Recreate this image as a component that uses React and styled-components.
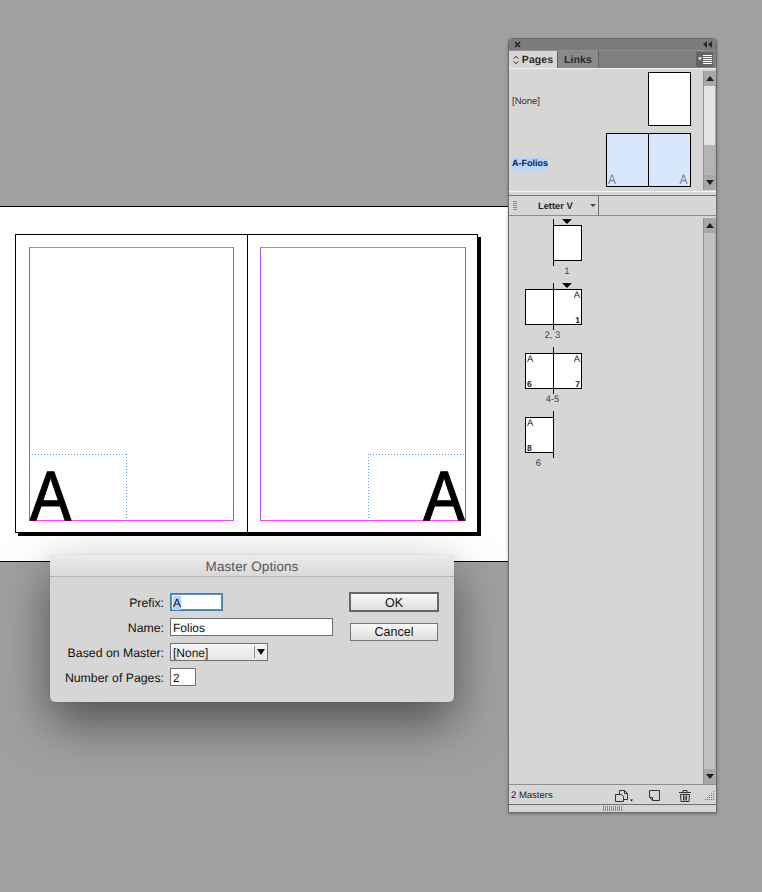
import React from 'react'
import styled, { createGlobalStyle } from 'styled-components'

const GlobalStyle = createGlobalStyle`
  * { box-sizing: border-box; }
  html, body { margin: 0; padding: 0; background: #a0a0a0; }
  body { font-family: "Liberation Sans", Arial, sans-serif; overflow: hidden; text-rendering: geometricPrecision; }
`

const Screen = styled.div`
  position: relative;
  width: 762px;
  height: 892px;
  padding-top: 206px;
  overflow: hidden;
`

/* document canvas */
const Pasteboard = styled.div`
  height: 356px;
  width: 520px;
  background: #fff;
  border-top: 1px solid #000;
  border-bottom: 1px solid #000;
  padding: 27px 0 0 15px;
`
const Spread = styled.div`
  display: flex;
  width: 463px;
  height: 299px;
  border: 1px solid #000;
  box-shadow: 3px 3px 0 #000;
`
const Page = styled.div`
  flex: 0 0 ${p => (p.$right ? '230px' : '231px')};
  padding: ${p => (p.$right ? '12px 11px 11px 12px' : '12px 13px 11px 13px')};
  border-left: ${p => (p.$right ? '1px solid #000' : 'none')};
  display: flex;
`
const MarginBox = styled.div`
  flex: 1;
  display: flex;
  flex-direction: column;
  justify-content: flex-end;
  align-items: ${p => (p.$right ? 'flex-end' : 'flex-start')};
  border: 1px solid;
  border-color: #d968e6 #a84ce8 #ff45ff #a84ce8;
`
const dots = '#5b97f0 0 1px, transparent 1px 3px'
const TextFrame = styled.div`
  width: 98px;
  height: 67px;
  margin-bottom: -1px;
  margin-${p => (p.$right ? 'right' : 'left')}: -1px;
  display: flex;
  align-items: flex-end;
  justify-content: ${p => (p.$right ? 'flex-end' : 'flex-start')};
  background:
    repeating-linear-gradient(90deg, ${dots}) top / ${p => (p.$right ? '95px' : '100%')} 1px no-repeat,
    repeating-linear-gradient(${dots}) ${p => (p.$right ? 'left' : 'right')} top / 1px 100% no-repeat
    ${p => (p.$right ? '' : `, repeating-linear-gradient(${dots}) left top / 1px 100% no-repeat`)};
`
const BigLetter = styled.span`
  font-size: 70px;
  line-height: 50px;
  height: 50px;
  color: #000;
  display: block;
  -webkit-text-stroke: 1.3px #000;
  transform: scaleX(0.88);
  transform-origin: ${p => (p.$right ? 'right' : 'left')} bottom;
  margin: ${p => (p.$right ? '0 1px 0 0' : '0 0 0 1px')};
`

/* master options dialog */
const Dialog = styled.div`
  position: absolute;
  left: 50px;
  top: 555px;
  width: 404px;
  height: 147px;
  background: #d6d6d6;
  border-radius: 5px;
  box-shadow: 0 20px 50px rgba(0, 0, 0, 0.5), 0 0 1px rgba(0, 0, 0, 0.3);
`
const DialogTitle = styled.div`
  height: 22px;
  line-height: 23px;
  border-bottom: 1px solid #b4b4b4;
  border-radius: 5px 5px 0 0;
  background: linear-gradient(#ececec, #d8d8d8);
  text-align: center;
  font-size: 13.5px;
  letter-spacing: 0.1px;
  color: #55565a;
`
const DialogBody = styled.div`
  display: flex;
  justify-content: space-between;
  padding: 16px 15px 0 0;
`
const Form = styled.div`
  display: grid;
  grid-template-columns: 114px auto;
  column-gap: 6px;
  row-gap: 7px;
  align-items: center;
  justify-items: start;
`
const Label = styled.label`
  justify-self: end;
  padding-top: 1px;
  font-size: 12.3px;
  color: #111;
`
const Field = styled.div`
  width: ${p => p.$w}px;
  height: 18px;
  line-height: 18px;
  padding-left: 2px;
  background: #fff;
  font-size: 12px;
  color: #111;
  border: ${p => (p.$focus ? '1px solid #3f7fb8' : '1px solid #707070')};
  box-shadow: ${p => (p.$focus ? '0 0 0 1px #5c93c4 inset' : 'none')};
`
const Selected = styled.span`
  display: inline-block;
  height: 14px;
  line-height: 15px;
  background: #b5d5ff;
`
const SelectBox = styled.div`
  width: 98px;
  height: 18px;
  display: flex;
  background: linear-gradient(#f6f6f6, #e6e6e6);
  border: 1px solid #707070;
  font-size: 12px;
  line-height: 18px;
  color: #111;
`
const SelectText = styled.span`
  flex: 1;
  padding-left: 2px;
`
const SelectArrow = styled.span`
  width: 13px;
  margin: 2px 0;
  border-left: 1px solid #8a8a8a;
  display: flex;
  align-items: center;
  justify-content: center;
  &::after {
    content: '';
    border-left: 4px solid transparent;
    border-right: 4px solid transparent;
    border-top: 6px solid #111;
  }
`
const Buttons = styled.div`
  display: flex;
  flex-direction: column;
  align-items: center;
  gap: 11px;
  margin-top: -1px;
`
const Button = styled.button`
  display: block;
  padding: ${p => (p.$primary ? '1px 0 0' : '0')};
  width: ${p => (p.$primary ? '90px' : '88px')};
  height: ${p => (p.$primary ? '20px' : '18px')};
  font: 12.5px "Liberation Sans", Arial, sans-serif;
  color: #111;
  background: linear-gradient(#f8f8f8, #dedede);
  border: ${p => (p.$primary ? '2px solid #666' : '1px solid #777')};
  border-radius: 0;
`

/* pages panel */
const Panel = styled.div`
  position: absolute;
  left: 508px;
  top: 38px;
  width: 209px;
  height: 775px;
  display: flex;
  flex-direction: column;
  background: #d6d6d6;
  border: 1px solid #6d6d6d;
  border-radius: 4px 4px 0 0;
  box-shadow: 0 1px 3px rgba(0, 0, 0, 0.3);
`
const TitleBar = styled.div`
  height: 11px;
  flex: none;
  display: flex;
  align-items: center;
  justify-content: space-between;
  padding: 0 4px 0 5px;
  background: #7b7b7b;
  border-radius: 3px 3px 0 0;
`
const TabRow = styled.div`
  height: 18px;
  flex: none;
  display: flex;
  align-items: stretch;
  background: #7f7f7f;
  border-top: 1px solid #8f8f8f;
`
const Tab = styled.div`
  width: ${p => p.$w}px;
  display: flex;
  align-items: center;
  justify-content: center;
  gap: 3px;
  font-size: 10.5px;
  font-weight: bold;
  letter-spacing: 0.1px;
  color: #2c2c2c;
  background: ${p => (p.$active ? '#d6d6d6' : '#8a8a8a')};
  border-right: 1px solid #666;
`
const MenuButton = styled.div`
  margin: 1px 3px 1px auto;
  width: 17px;
  display: flex;
  align-items: center;
  justify-content: center;
  background: #646464;
`
const Masters = styled.div`
  height: 123px;
  flex: none;
  display: flex;
  border-top: 1px solid #f2f2f2;
`
const MasterList = styled.div`
  flex: 1;
  display: flex;
  flex-direction: column;
  padding: 3px 12px 0 3px;
  gap: 7px;
`
const MasterRow = styled.div`
  height: 54px;
  display: flex;
  justify-content: space-between;
  align-items: center;
`
const MasterName = styled.span`
  font-size: ${p => (p.$active ? '9px' : '9.5px')};
  font-weight: ${p => (p.$active ? 'bold' : 'normal')};
  color: ${p => (p.$active ? '#0b1c3c' : '#333')};
  background: ${p => (p.$active ? '#b5d5ff' : 'transparent')};
  line-height: 11px;
  margin-top: ${p => (p.$active ? '6px' : '4px')};
`
const Thumb = styled.div`
  height: 100%;
  width: ${p => p.$w}px;
  display: flex;
  background: ${p => (p.$tint ? '#d8e8fb' : '#fff')};
  border: 1px solid #000;
`
const ThumbPage = styled.div`
  flex: 1;
  display: flex;
  align-items: flex-end;
  justify-content: ${p => (p.$right ? 'flex-end' : 'flex-start')};
  padding: 0 3px 0 1px;
  border-left: ${p => (p.$right ? '1px solid #000' : 'none')};
`
const ThumbLetter = styled.span`
  display: block;
  font-size: 14px;
  line-height: 13px;
  color: #6b7fa2;
  transform: scaleX(0.85);
  transform-origin: ${p => (p.$right ? 'right' : 'left')} bottom;
`
const Scrollbar = styled.div`
  width: 13px;
  flex: none;
  margin: ${p => (p.$tall ? '2px 0 0 0' : '2px 0 1px 0')};
  display: flex;
  flex-direction: column;
  background: #b9b9b9;
  border-left: 1px solid #8e8e8e;
  border-right: 1px solid #a8a8a8;
`
const ScrollArrow = styled.div`
  height: 15px;
  flex: none;
  display: flex;
  align-items: center;
  justify-content: center;
  background: #a8a8a8;
  &::after {
    content: '';
    border-left: 4px solid transparent;
    border-right: 4px solid transparent;
    border-${p => (p.$down ? 'top' : 'bottom')}: 5px solid #1f1f1f;
  }
`
const ScrollThumb = styled.div`
  height: 59px;
  flex: none;
  background: #e4e4e4;
`
const ScrollTrack = styled.div`
  flex: 1;
  background: ${p => (p.$light ? '#c2c2c2' : '#b4b4b4')};
`
const Splitter = styled.div`
  height: 5px;
  flex: none;
  border-top: 1px solid #f4f4f4;
  border-bottom: 1px solid #757575;
`
const SizeBar = styled.div`
  height: 20px;
  flex: none;
  display: flex;
  align-items: center;
  border-bottom: 1px solid #8c8c8c;
`
const Grip = styled.div`
  width: 4px;
  height: 10px;
  margin-left: 4px;
  background: repeating-linear-gradient(#8f8f8f 0 1px, transparent 1px 2px);
`
const SizeSelect = styled.div`
  width: 82px;
  height: 100%;
  display: flex;
  align-items: center;
  border-right: 1px solid #6d6d6d;
  font-size: 9.3px;
  font-weight: bold;
  color: #1c1c1c;
  padding-left: 21px;
  &::after {
    content: '';
    margin-left: 17px;
    border-left: 3px solid transparent;
    border-right: 3px solid transparent;
    border-top: 3px solid #444;
  }
`
const PagesArea = styled.div`
  flex: 1;
  min-height: 0;
  display: flex;
`
const PageList = styled.div`
  flex: 1;
  display: flex;
  flex-direction: column;
  padding: 3px 0 0 16px;
`
const PageItem = styled.div`
  height: 64px;
  display: flex;
  flex-direction: column;
`
const ThumbRow = styled.div`
  position: relative;
  display: flex;
  width: 57px;
  height: 48px;
  padding: 6px 0;
`
const Spine = styled.span`
  position: absolute;
  left: 28px;
  top: 0;
  bottom: 1px;
  width: 1px;
  background: #000;
`
const Marker = styled.span`
  position: absolute;
  left: 37px;
  top: 0;
  border-left: 5px solid transparent;
  border-right: 5px solid transparent;
  border-top: 5px solid #000;
`
const MiniPage = styled.div`
  width: 29px;
  height: 36px;
  margin-left: ${p => (p.$offset ? '28px' : '0')};
  padding: 1px 1px 0;
  display: flex;
  flex-direction: column;
  justify-content: space-between;
  align-items: ${p => (p.$right ? 'flex-end' : 'flex-start')};
  background: #fff;
  border: 1px solid #000;
  border-${p => (p.$right ? 'left' : 'right')}: none;
  font-size: 9.5px;
  line-height: 9px;
  color: #222;
`
const Folio = styled.span`
  font-size: 8.5px;
  line-height: 8px;
  font-weight: bold;
  color: #111;
`
const PageLabel = styled.div`
  width: 55px;
  margin-top: -1px;
  padding-left: ${p => (p.$side === 'right' ? 29 : 0)}px;
  padding-right: ${p => (p.$side === 'left' ? 28 : 0)}px;
  font-size: 9.5px;
  line-height: 11px;
  color: #444;
  text-align: center;
`
const Footer = styled.div`
  height: 21px;
  flex: none;
  display: flex;
  align-items: center;
  padding: 2px 1px 0 2px;
  border-top: 1px solid #8e8e8e;
  border-bottom: 1px solid #6f6f6f;
  font-size: 9.5px;
  color: #222;
`
const FooterIcons = styled.div`
  margin-left: auto;
  display: flex;
  align-items: center;
`
const IconSlot = styled.span`
  display: flex;
  margin-left: ${p => p.$gap}px;
`
const ResizeBar = styled.div`
  height: 7px;
  flex: none;
  display: flex;
  align-items: center;
  justify-content: center;
`
const ResizeTicks = styled.span`
  width: 20px;
  height: 5px;
  background: repeating-linear-gradient(90deg, #8a8a8a 0 1px, transparent 1px 2px);
`

const CloseIcon = () => (
  <svg width="7" height="7" viewBox="0 0 7 7"><path d="M1 1l5 5M6 1L1 6" stroke="#1c1c1c" strokeWidth="1.4" /></svg>
)
const CollapseIcon = () => (
  <svg width="9" height="7" viewBox="0 0 9 7" fill="#2a2a2a"><path d="M4 0v7L0 3.5zM9 0v7L5 3.5z" /></svg>
)
const StepperIcon = () => (
  <svg width="6" height="10" viewBox="0 0 6 10" fill="none" stroke="#2c2c2c" strokeWidth="1"><path d="M.7 3.7L3 1.2l2.3 2.5M.7 6.3L3 8.8l2.3-2.5" /></svg>
)
const MenuIcon = () => (
  <svg width="14" height="9" viewBox="0 0 14 9"><path d="M0 2.5h4L2 5z" fill="#fff" /><path d="M5 .5h9M5 2.5h9M5 4.5h9M5 6.5h9M5 8.5h9" stroke="#fff" /></svg>
)
const DuplicateIcon = () => (
  <svg width="18" height="13" viewBox="0 0 18 13" fill="none" stroke="#333"><path d="M.5 5.5h6l2 2v5h-8zM4.5 5V1.500h5l3 3v6h-4M9.500 1.500v3h3" /><path d="M15 10.500h3l-1.500 2z" fill="#111" stroke="none" /></svg>
)
const NewPageIcon = () => (
  <svg width="11" height="11" viewBox="0 0 11 11" fill="none" stroke="#333"><path d="M.5.5h10v10h-7l-3-3zM.5 7.500h3v3" /></svg>
)
const TrashIcon = () => (
  <svg width="12" height="12" viewBox="0 0 12 12" fill="none" stroke="#333"><path d="M0 2.500h12M4 2V.5h4V2M1.500 4.500h9L10 11.500H2zM4.500 5.500v5M6 5.500v5M7.500 5.500v5" /></svg>
)
const GripIcon = () => (
  <svg width="11" height="11" viewBox="0 0 11 11" fill="#777"><path d="M9 1h1v1H9zM7 3h1v1H7zM9 3h1v1H9zM5 5h1v1H5zM7 5h1v1H7zM9 5h1v1H9zM3 7h1v1H3zM5 7h1v1H5zM7 7h1v1H7zM9 7h1v1H9zM1 9h1v1H1zM3 9h1v1H3zM5 9h1v1H5zM7 9h1v1H7zM9 9h1v1H9z" /></svg>
)

const pageItems = [
  { label: '1', side: 'right', marker: true, pages: [{ right: true, offset: true }] },
  { label: '2, 3', marker: true, pages: [{}, { right: true, top: 'A', foot: '1' }] },
  { label: '4-5', pages: [{ top: 'A', foot: '6' }, { right: true, top: 'A', foot: '7' }] },
  { label: '6', side: 'left', pages: [{ top: 'A', foot: '8' }] },
]

const SpreadPage = ({ right }) => (
  <Page $right={right}>
    <MarginBox $right={right}>
      <TextFrame $right={right}>
        <BigLetter $right={right}>A</BigLetter>
      </TextFrame>
    </MarginBox>
  </Page>
)

export default function App() {
  return (
    <>
      <GlobalStyle />
      <Screen>
        <Pasteboard>
          <Spread>
            <SpreadPage />
            <SpreadPage right />
          </Spread>
        </Pasteboard>

        <Dialog>
          <DialogTitle>Master Options</DialogTitle>
          <DialogBody>
            <Form>
              <Label>Prefix:</Label>
              <Field $w={53} $focus><Selected>A</Selected></Field>
              <Label>Name:</Label>
              <Field $w={163}>Folios</Field>
              <Label>Based on Master:</Label>
              <SelectBox>
                <SelectText>[None]</SelectText>
                <SelectArrow />
              </SelectBox>
              <Label>Number of Pages:</Label>
              <Field $w={26}>2</Field>
            </Form>
            <Buttons>
              <Button $primary>OK</Button>
              <Button>Cancel</Button>
            </Buttons>
          </DialogBody>
        </Dialog>

        <Panel>
          <TitleBar>
            <CloseIcon />
            <CollapseIcon />
          </TitleBar>
          <TabRow>
            <Tab $active $w={49}><StepperIcon />Pages</Tab>
            <Tab $w={41}>Links</Tab>
            <MenuButton><MenuIcon /></MenuButton>
          </TabRow>
          <Masters>
            <MasterList>
              <MasterRow>
                <MasterName>[None]</MasterName>
                <Thumb $w={43} />
              </MasterRow>
              <MasterRow>
                <MasterName $active>A-Folios</MasterName>
                <Thumb $w={85} $tint>
                  <ThumbPage><ThumbLetter>A</ThumbLetter></ThumbPage>
                  <ThumbPage $right><ThumbLetter $right>A</ThumbLetter></ThumbPage>
                </Thumb>
              </MasterRow>
            </MasterList>
            <Scrollbar>
              <ScrollArrow />
              <ScrollThumb />
              <ScrollTrack />
              <ScrollArrow $down />
            </Scrollbar>
          </Masters>
          <Splitter />
          <SizeBar>
            <Grip />
            <SizeSelect>Letter V</SizeSelect>
          </SizeBar>
          <PagesArea>
            <PageList>
              {pageItems.map(item => (
                <PageItem key={item.label}>
                  <ThumbRow>
                    {item.pages.map((pg, i) => (
                      <MiniPage key={i} $right={pg.right} $offset={pg.offset}>
                        <span>{pg.top}</span>
                        <Folio>{pg.foot}</Folio>
                      </MiniPage>
                    ))}
                    <Spine />
                    {item.marker && <Marker />}
                  </ThumbRow>
                  <PageLabel $side={item.side}>{item.label}</PageLabel>
                </PageItem>
              ))}
            </PageList>
            <Scrollbar $tall>
              <ScrollArrow />
              <ScrollTrack $light />
              <ScrollArrow $down />
            </Scrollbar>
          </PagesArea>
          <Footer>
            2 Masters
            <FooterIcons>
              <IconSlot $gap={0}><DuplicateIcon /></IconSlot>
              <IconSlot $gap={16}><NewPageIcon /></IconSlot>
              <IconSlot $gap={19}><TrashIcon /></IconSlot>
              <IconSlot $gap={13}><GripIcon /></IconSlot>
            </FooterIcons>
          </Footer>
          <ResizeBar><ResizeTicks /></ResizeBar>
        </Panel>
      </Screen>
    </>
  )
}
